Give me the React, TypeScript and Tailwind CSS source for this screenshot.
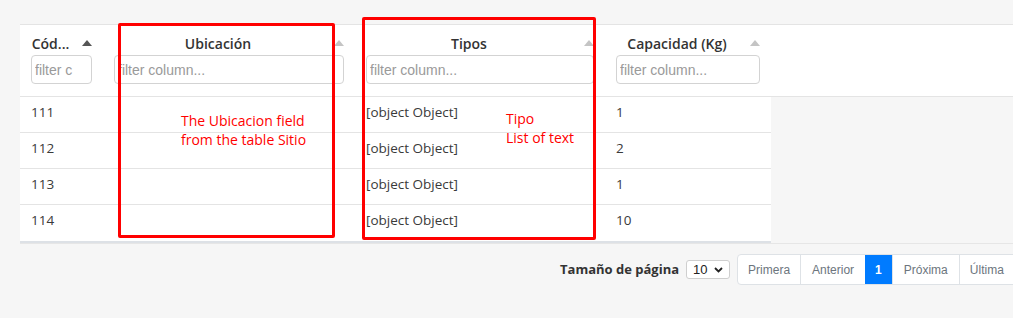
const columns = [
  { title: 'Código', width: 'w-[83px]', active: true },
  { title: 'Ubicación', width: 'w-[252px]', active: false },
  { title: 'Tipos', width: 'w-[250px]', active: false },
  { title: 'Capacidad (Kg)', width: 'w-[166px]', active: false },
]

const rows = [
  { code: '111', tipos: '[object Object]', cap: '1' },
  { code: '112', tipos: '[object Object]', cap: '2' },
  { code: '113', tipos: '[object Object]', cap: '1' },
  { code: '114', tipos: '[object Object]', cap: '10' },
]

function SortArrow({ active }: { active: boolean }) {
  return (
    <svg width="10" height="6" viewBox="0 0 10 6" className="shrink-0">
      <path d="M0 6 L5 0 L10 6 Z" fill={active ? '#555555' : '#c4c4c4'} />
    </svg>
  )
}

function HeaderCell({ title, width, active }: { title: string; width: string; active: boolean }) {
  return (
    <div className={`${width} shrink-0 px-[11px] pt-[8px]`}>
      <div className="flex items-center h-[20px]">
        <div className="flex-1 min-w-0 truncate text-center text-[14px] font-semibold text-[#333]">
          {title === 'Código' ? 'Cód...' : title}
        </div>
        <div className="w-[22px] flex justify-end">
          <SortArrow active={active} />
        </div>
      </div>
      <input
        type="text"
        placeholder={title === 'Código' ? 'filter c' : 'filter column...'}
        className="mt-[2px] w-full h-[29px] rounded-[4px] border border-[#d3d3d3] bg-white px-[3px] text-[14px] text-[#333] placeholder-[#9a9a9a] focus:outline-none [font-family:'Liberation_Sans',Arial,sans-serif]"
      />
    </div>
  )
}

export default function App() {
  return (
    <div className="relative min-h-[318px] w-full overflow-hidden bg-[#f6f6f6] [font-family:'Open_Sans',sans-serif]">
      <div className="pt-[24px] pl-[20px]">
        <div className="border-t border-[#e4e4e4] bg-white">
          <div className="flex border-b border-[#e4e4e4] pb-[12px]">
            {columns.map(c => (
              <HeaderCell key={c.title} {...c} />
            ))}
          </div>
        </div>
        <div className="border-b border-[#e6e6e6]">
          <div className="w-[751px] bg-white border-b-2 border-[#dde1e6]">
            {rows.map((r, i) => (
              <div
                key={r.code}
                className={`flex h-[36px] text-[13.5px] text-[#3a3a3a] ${i < rows.length - 1 ? 'border-b border-[#e4e4e4]' : ''}`}
              >
                <div className="w-[83px] px-[11px] pt-[5px]">{r.code}</div>
                <div className="w-[252px] px-[11px] pt-[5px]"></div>
                <div className="w-[250px] px-[11px] pt-[5px]">{r.tipos}</div>
                <div className="w-[166px] px-[11px] pt-[5px]">{r.cap}</div>
              </div>
            ))}
          </div>
        </div>

        <div className="flex items-center mt-[10px] ml-[540px] w-[600px] whitespace-nowrap">
          <span className="text-[13px] font-bold text-[#333] mr-[7px]">Tamaño de página</span>
          <div className="flex items-center justify-between w-[44px] h-[19px] rounded-[3px] border border-[#cfcfcf] bg-white px-[6px] text-[13px] text-[#222] [font-family:'Liberation_Sans',Arial,sans-serif]">
            <span>10</span>
            <svg width="9" height="6" viewBox="0 0 9 6">
              <path d="M1 1 L4.5 4.5 L8 1" fill="none" stroke="#222" strokeWidth="1.8" />
            </svg>
          </div>
          <div className="ml-[7px] flex h-[31px] rounded-l-[4px] border border-[#dee2e6] bg-white text-[12px] text-[#6c757d] [font-family:'Liberation_Sans',Arial,sans-serif]">
            <span className="flex items-center px-[10px]">Primera</span>
            <span className="flex items-center px-[11px] border-l border-[#dee2e6]">Anterior</span>
            <span className="flex items-center px-[10px] bg-[#007bff] text-white font-bold">1</span>
            <span className="flex items-center px-[11px] border-l border-[#dee2e6]">Próxima</span>
            <span className="flex items-center px-[10px] border-l border-[#dee2e6] pr-[30px]">Última</span>
          </div>
        </div>
      </div>

      <div className="absolute left-[118px] top-[23px] w-[217px] h-[215px] border-[3px] border-[#ff0000] rounded-[2px]" />
      <div className="absolute left-[362px] top-[17px] w-[234px] h-[223px] border-[3px] border-[#ff0000] rounded-[2px]" />
      <div className="absolute left-[181px] top-[111px] text-[14px] leading-[19px] text-[#ff0000] [font-family:'Open_Sans',sans-serif]">
        The Ubicacion field
        <br />
        from the table Sitio
      </div>
      <div className="absolute left-[506px] top-[109px] text-[14px] leading-[19px] text-[#ff0000] [font-family:'Open_Sans',sans-serif]">
        Tipo
        <br />
        List of text
      </div>
    </div>
  )
}
